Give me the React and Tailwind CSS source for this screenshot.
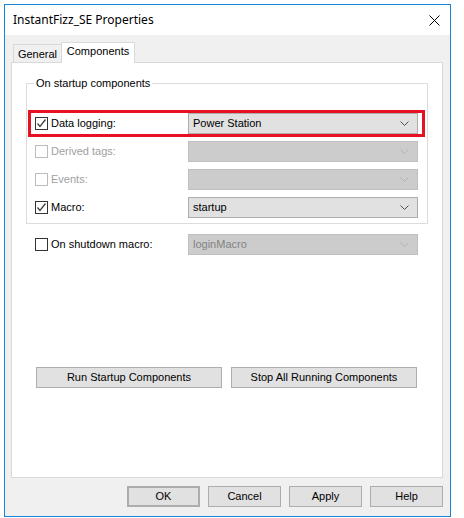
import React from 'react';

const Check = ({ checked, disabled }) => (
  <span
    className={`flex items-center justify-center w-[13px] h-[13px] bg-white border ${
      disabled ? 'border-[#bcbcbc]' : 'border-[#333333]'
    }`}
  >
    {checked && (
      <svg width="11" height="11" viewBox="0 0 11 11">
        <path d="M1.5 5.5 L4 8.5 L9.5 1.5" fill="none" stroke="#404040" strokeWidth="1.3" />
      </svg>
    )}
  </span>
);

const Chevron = ({ disabled }) => (
  <svg width="9" height="5" viewBox="0 0 9 5">
    <path d="M0.5 0.5 L4.5 4.5 L8.5 0.5" fill="none" stroke={disabled ? '#b4b4b4' : '#505050'} strokeWidth="1" />
  </svg>
);

const Combo = ({ value, disabled }) => (
  <div
    className={`flex items-center justify-between w-[230px] h-[21px] border pl-[4px] pr-[8px] ${
      disabled ? 'bg-[#cccccc] border-[#bfbfbf] text-[#838383]' : 'bg-[#e1e1e1] border-[#adadad] text-black'
    }`}
  >
    <span>{value}</span>
    <Chevron disabled={disabled} />
  </div>
);

const rows = [
  { label: 'Data logging:', checked: true, value: 'Power Station', highlight: true },
  { label: 'Derived tags:', disabled: true },
  { label: 'Events:', disabled: true },
  { label: 'Macro:', checked: true, value: 'startup' },
];

const Button = ({ children, className = '' }) => (
  <button className={`flex items-center justify-center h-[21px] bg-[#e1e1e1] border border-[#adadad] text-black ${className}`}>
    {children}
  </button>
);

export default function App() {
  const ui = { fontFamily: '"Liberation Sans", Arial, sans-serif' };

  return (
    <div className="w-[464px] h-[518px] bg-white pt-[4px] pl-[4px]">
      <div className="w-[447px] h-[513px] border border-[#1883d7] bg-[#f0f0f0] flex flex-col text-[11px]" style={ui}>
        <div className="h-[30px] bg-white flex items-center justify-between pl-[8px] pr-[10px] shrink-0">
          <span className="text-[12px] text-black" style={{ fontFamily: '"Noto Sans", "Open Sans", sans-serif' }}>
            InstantFizz_SE Properties
          </span>
          <svg width="11" height="11" viewBox="0 0 11 11">
            <path d="M0.5 0.5 L10.5 10.5 M10.5 0.5 L0.5 10.5" stroke="#000" strokeWidth="1" />
          </svg>
        </div>

        <div className="pt-[7px] pl-[6px] flex flex-col">
          <div className="flex items-end h-[20px] pl-[2px]">
            <div className="h-[18px] w-[48px] border-t border-l border-[#d9d9d9] flex items-center justify-center text-black pt-[1px]">
              General
            </div>
            <div className="relative z-10 h-[21px] w-[74px] -mb-[1px] bg-white border-t border-l border-r border-[#d9d9d9] flex items-center justify-center text-black pb-[3px]">
              Components
            </div>
          </div>

          <div className="w-[432px] h-[416px] bg-white border border-[#d9d9d9] flex flex-col">
            <div className="relative ml-[14px] mt-[20px] w-[402px] border border-[#dcdcdc] pt-[26px] pb-[2px]">
              <span className="absolute left-[7px] -top-[7px] bg-white px-[2px] leading-[13px] text-black">
                On startup components
              </span>
              <div className="flex flex-col gap-[1px]">
                {rows.map((r) => (
                  <div
                    key={r.label}
                    className={`flex items-center h-[27px] w-[397px] ml-[1px] border-[3px] ${
                      r.highlight ? 'border-[#e81123]' : 'border-transparent'
                    }`}
                  >
                    <div className={`flex items-center gap-[3px] w-[157px] pl-[4px] ${r.disabled ? 'text-[#a0a0a0]' : 'text-black'}`}>
                      <Check checked={r.checked} disabled={r.disabled} />
                      <span>{r.label}</span>
                    </div>
                    <Combo value={r.value} disabled={r.disabled} />
                  </div>
                ))}
              </div>
            </div>

            <div className="flex items-center h-[21px] mt-[10px]">
              <div className="flex items-center gap-[3px] w-[176px] pl-[23px] text-black">
                <Check />
                <span>On shutdown macro:</span>
              </div>
              <Combo value="loginMacro" disabled />
            </div>

            <div className="flex gap-[9px] ml-[24px] mt-[112px]">
              <Button className="w-[186px]">Run Startup Components</Button>
              <Button className="w-[186px]">Stop All Running Components</Button>
            </div>
          </div>
        </div>

        <div className="flex justify-end gap-[8px] pr-[7px] mt-[8px]">
          <Button className="w-[73px] border-[2px] border-[#0078d7]">OK</Button>
          <Button className="w-[73px]">Cancel</Button>
          <Button className="w-[73px]">Apply</Button>
          <Button className="w-[73px]">Help</Button>
        </div>
      </div>
    </div>
  );
}
